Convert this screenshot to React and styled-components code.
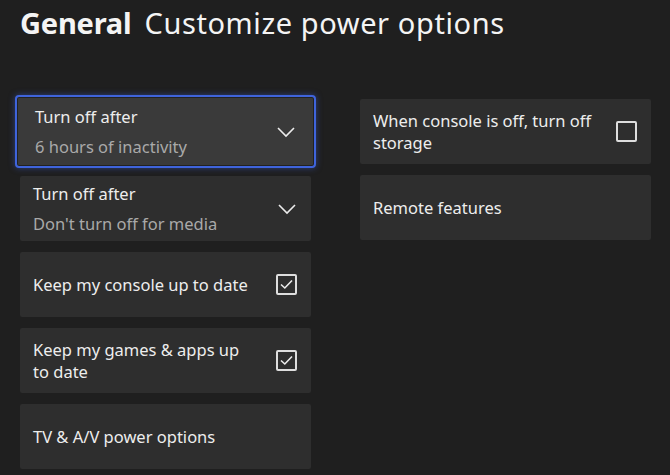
import React from "react";
import styled, { createGlobalStyle } from "styled-components";

const GlobalStyle = createGlobalStyle`
  html, body {
    margin: 0;
    padding: 0;
    background: #1f1f1f;
  }
  body {
    font-family: "Noto Sans", "Open Sans", sans-serif;
    color: #ededed;
  }
`;

const Page = styled.div`
  width: 670px;
  height: 475px;
  overflow: hidden;
  background: #1f1f1f;
  padding: 3px 0 0 20px;
  box-sizing: border-box;
`;

const Title = styled.h1`
  margin: 0;
  font-size: 29px;
  font-weight: 400;
  line-height: 40px;
  color: #f4f4f4;
  display: flex;
  gap: 13px;
`;

const Bold = styled.span`
  font-weight: 700;
  letter-spacing: -0.2px;
`;

const Light = styled.span`
  letter-spacing: 0.6px;
`;

const Columns = styled.div`
  display: grid;
  grid-template-columns: 291px 291px;
  column-gap: 49px;
  margin-top: 52px;
  align-items: start;
`;

const Column = styled.div`
  display: flex;
  flex-direction: column;
  gap: 11px;
  padding-top: ${(p) => p.$offset || 0}px;
`;

const Card = styled.div`
  height: 65px;
  box-sizing: border-box;
  background: #2e2e2e;
  border-radius: 2px;
  display: flex;
  align-items: center;
  justify-content: space-between;
  padding: 0 14px 0 13px;

  &.focused {
    height: 73px;
    margin: 0 -5px -3px;
    padding: 0 18px 0 18px;
    background: #3a3a3a;
    border: 2px solid #3f64dc;
    box-shadow: 0 0 6px rgba(60, 95, 220, 0.5), inset 0 0 0 1px #222;
    border-radius: 4px;
  }
`;

const Texts = styled.div`
  display: flex;
  flex-direction: column;
  gap: 8px;
  max-width: 225px;
`;

const Label = styled.div`
  font-size: 16.5px;
  line-height: 22px;
  color: #ededed;
`;

const Sub = styled.div`
  font-size: 16.5px;
  line-height: 22px;
  color: #a9a9a9;
`;

const Box = styled.div`
  width: 21px;
  height: 21px;
  box-sizing: border-box;
  border: 2px solid #dedede;
  border-radius: 2px;
  display: flex;
  align-items: center;
  justify-content: center;
  flex-shrink: 0;
`;

const Chevron = () => (
  <svg width="20" height="12" viewBox="0 0 20 12">
    <path d="M2 2 L10 10 L18 2" fill="none" stroke="#ececec" strokeWidth="1.6" />
  </svg>
);

const Checkbox = ({ checked }) => (
  <Box>
    {checked && (
      <svg width="13" height="11" viewBox="0 0 13 11">
        <path d="M1 5.5 L4.8 9 L12 1.5" fill="none" stroke="#ececec" strokeWidth="1.6" />
      </svg>
    )}
  </Box>
);

export default function App() {
  return (
    <Page>
      <GlobalStyle />
      <Title>
        <Bold>General</Bold>
        <Light>Customize power options</Light>
      </Title>
      <Columns>
        <Column>
          <Card className="focused">
            <Texts>
              <Label>Turn off after</Label>
              <Sub>6 hours of inactivity</Sub>
            </Texts>
            <Chevron />
          </Card>
          <Card>
            <Texts>
              <Label>Turn off after</Label>
              <Sub>Don't turn off for media</Sub>
            </Texts>
            <Chevron />
          </Card>
          <Card>
            <Label>Keep my console up to date</Label>
            <Checkbox checked />
          </Card>
          <Card>
            <Texts>
              <Label>Keep my games &amp; apps up to date</Label>
            </Texts>
            <Checkbox checked />
          </Card>
          <Card>
            <Label>TV &amp; A/V power options</Label>
          </Card>
        </Column>
        <Column $offset={4}>
          <Card>
            <Texts>
              <Label>When console is off, turn off storage</Label>
            </Texts>
            <Checkbox />
          </Card>
          <Card>
            <Label>Remote features</Label>
          </Card>
        </Column>
      </Columns>
    </Page>
  );
}
